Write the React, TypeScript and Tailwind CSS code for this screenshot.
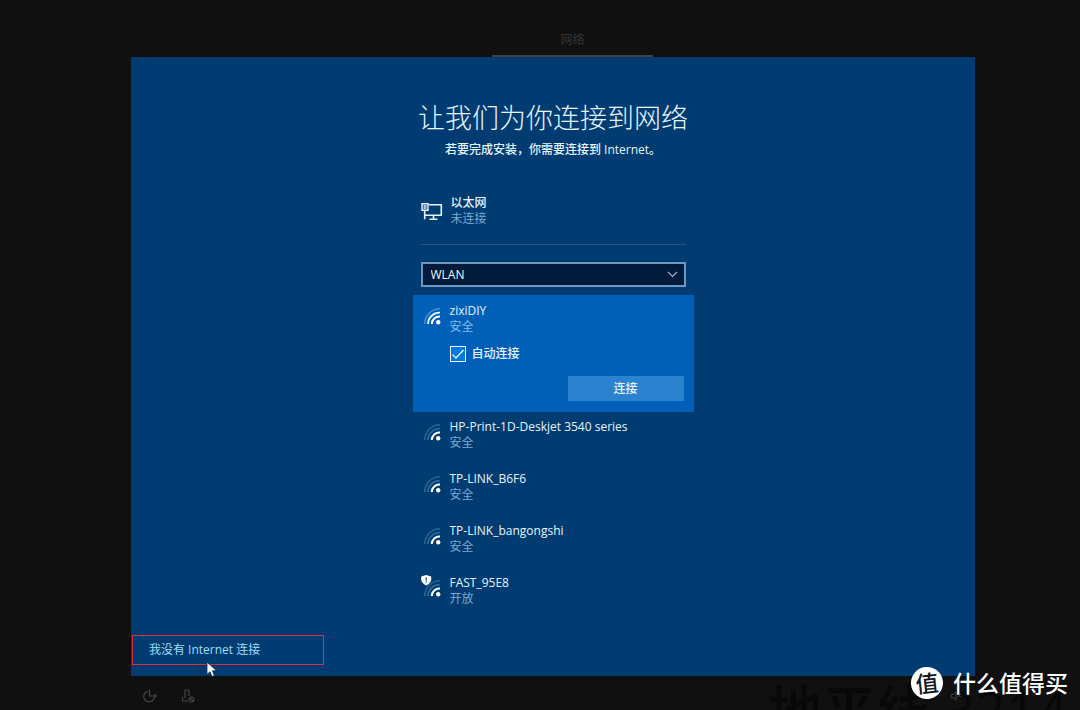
import { useState } from 'react';

function WifiIcon({ strength, shield = false }: { strength: number; shield?: boolean }) {
  const on = (n: number) => (strength >= n ? 1 : 0.3);
  return (
    <svg width="24" height="26" viewBox="1 1 24 26" fill="none" stroke="#fff" strokeWidth="1.5" aria-hidden="true">
      <circle cx="18.2" cy="20.2" r="2.2" fill="#fff" stroke="none" />
      <path d="M11.8 22A7.5 7.5 0 0 1 20 14.6" strokeWidth="2" />
      <path d="M8 22A11.5 11.5 0 0 1 20 10.6" stroke={strength >= 3 ? '#e6f4fb' : '#8cc4f2'} strokeOpacity={on(3)} strokeWidth="1.9" />
      <path d="M4.7 22A15.3 15.3 0 0 1 20 6.8" stroke="#8cc4f2" strokeOpacity={strength >= 3 ? 0.5 : 0.3} strokeWidth="1.6" />
      {shield && (
        <g stroke="none">
          <path d="M1.2 2.6 6.2 1l5 1.6v3c0 2.6-2 4.3-5 5.8C3.2 9.9 1.2 8.2 1.2 5.6Z" fill="#fff" />
          <path d="M5.6 3.2h1.2v3.5H5.6zM5.6 7.6h1.2v1.2H5.6z" fill="#28507c" />
        </g>
      )}
    </svg>
  );
}

const networks = [
  { name: 'HP-Print-1D-Deskjet 3540 series', status: '安全' },
  { name: 'TP-LINK_B6F6', status: '安全' },
  { name: 'TP-LINK_bangongshi', status: '安全' },
  { name: 'FAST_95E8', status: '开放', open: true },
];

export default function App() {
  const [auto, setAuto] = useState(true);
  return (
    <div className="relative flex min-h-screen flex-col overflow-hidden bg-[#101010] pr-[105px] pl-[131px] font-['Open_Sans','Noto_Sans_CJK_SC',sans-serif] text-xs leading-4 text-[#e6f4fb]">
      <header className="flex h-[57px] justify-center pl-[39px]">
        <div className="flex w-[161px] items-end justify-center border-b-2 border-[#3c4245] pb-[7px] text-[#353535]">网络</div>
      </header>

      <main className="flex flex-1 flex-col bg-[#003c71]">
        <div className="mx-auto flex w-[281px] flex-col pt-[45px]">
          <h1 className="text-center text-[27px] leading-8 font-light whitespace-nowrap">让我们为你连接到网络</h1>
          <p className="mt-2 text-center font-medium">若要完成安装，你需要连接到 Internet。</p>

          <section className="mx-2 mt-[37px] flex items-center gap-2 border-b border-[#1d5587] pb-[17px]">
            <svg width="22" height="20" viewBox="0 0 22 20" fill="none" stroke="#e6f4fb" strokeWidth="1.6" aria-hidden="true">
              <path d="M8 3.7H20.3V14.300H4M3.700 9V18.3M12.500 14.5v3.500M8.500 18.2H16.500" />
              <path d="M1 2.800H7V9.200H1ZM2.500 5H5.500M2.500 7H5.500" strokeWidth="1.4" />
            </svg>
            <div>
              <h2 className="font-medium">以太网</h2>
              <p className="text-[#7fa9d0]">未连接</p>
            </div>
          </section>

          <div className="relative mx-2 mt-[17px]">
            <select aria-label="网络类型" className="block h-[25px] w-full appearance-none border-2 border-[#6f97bd] bg-[#001b3b] px-2 text-xs leading-4 font-medium text-[#f2f8fb]">
              <option>WLAN</option>
            </select>
            <svg className="pointer-events-none absolute top-2 right-2" width="11" height="9" viewBox="0 0 11 9" fill="none" stroke="#9ab4cc" strokeWidth="1.2" aria-hidden="true">
              <path d="m1 2 4.500 4.500L10 2" />
            </svg>
          </div>

          <section className="mt-2 flex flex-col bg-[#0060b8] pt-2 pr-[10px] pb-[11px] pl-2">
            <div className="flex gap-1">
              <WifiIcon strength={3} />
              <div className="pl-px">
                <h2 className="font-medium">zixiDIY</h2>
                <p className="text-[#8abdec]">安全</p>
              </div>
            </div>
            <label className="relative mt-[11px] ml-[29px] flex items-center gap-[6px] font-medium">
              <input
                type="checkbox"
                checked={auto}
                onChange={(e) => setAuto(e.target.checked)}
                className="size-4 appearance-none border border-[#e6f4fb] bg-[#0078e0]"
              />
              {auto && (
                <svg className="pointer-events-none absolute left-0" width="16" height="16" viewBox="0 0 16 16" fill="none" stroke="#e6f4fb" strokeWidth="1.3" aria-hidden="true">
                  <path d="m2.500 8.500 3.500 3.500 7.500-8" />
                </svg>
              )}
              自动连接
            </label>
            <button type="button" className="mt-[14px] h-[25px] w-[116px] self-end bg-[#2b83cf] font-medium">连接</button>
          </section>

          <ul>
            {networks.map((n) => (
              <li key={n.name} className="flex h-[52px] gap-1 px-2 pt-[7px]">
                <WifiIcon strength={2} shield={n.open} />
                <div className="pl-px">
                  <h2 className="font-medium whitespace-nowrap">{n.name}</h2>
                  <p className="text-[#7fa9d0]">{n.status}</p>
                </div>
              </li>
            ))}
          </ul>
        </div>

        <a href="#offline" className="mt-auto mb-[11px] ml-px flex h-[30px] w-48 items-center border border-[#d9303c] pl-4 text-[#a0dcf5]">
          我没有 Internet 连接
        </a>
      </main>

      <footer className="flex h-[34px] items-center gap-6 pt-[6px] pl-3 text-[#454545]">
        <svg width="14" height="14" viewBox="0 0 14 14" fill="none" stroke="currentColor" strokeWidth="1.2" aria-hidden="true">
          <path d="M4.500 2.600A5.200 5.200 0 1 0 11.200 8M6.500 1v6H13M11 4.800 13.200 7 11 9.200" />
        </svg>
        <svg width="14" height="14" viewBox="0 0 14 14" fill="none" stroke="currentColor" strokeWidth="1.2" aria-hidden="true">
          <path d="M4 9V1.500Q4 1 4.500 1h3Q8 1 8 1.500V7M1.500 7.500v4.500H7" />
          <circle cx="10.500" cy="10.500" r="2.500" />
          <path d="m8.800 8.800 3.400 3.400" />
        </svg>
      </footer>

      <div className="pointer-events-none absolute right-0 bottom-0 h-[34px] w-[312px] overflow-hidden text-[54px] leading-[68px] font-medium whitespace-nowrap text-[#080808]">
        地平线 3214
      </div>
      <svg className="absolute right-[118px] bottom-2" width="12" height="12" viewBox="0 0 12 12" fill="none" stroke="#454545" aria-hidden="true">
        <path d="M1 4.500h2L6 2v8L3 7.500H1ZM8 4l3 3M11 4 8 7" />
      </svg>

      <div className="absolute right-3 bottom-[11px] flex items-center gap-[10px] text-[23px] leading-8 font-medium whitespace-nowrap text-white">
        <span className="flex size-8 -rotate-6 items-center justify-center rounded-full bg-white text-[#111820]">值</span>
        什么值得买
      </div>

      <svg className="pointer-events-none absolute bottom-[32px] left-[206px]" width="12" height="17" viewBox="0 0 12 17" aria-hidden="true">
        <path d="M1 1v12.500l3-2.800 2 4.800 2.400-1-2-4.700H10.500Z" fill="#fff" stroke="#14263c" strokeWidth="0.8" />
      </svg>
    </div>
  );
}
